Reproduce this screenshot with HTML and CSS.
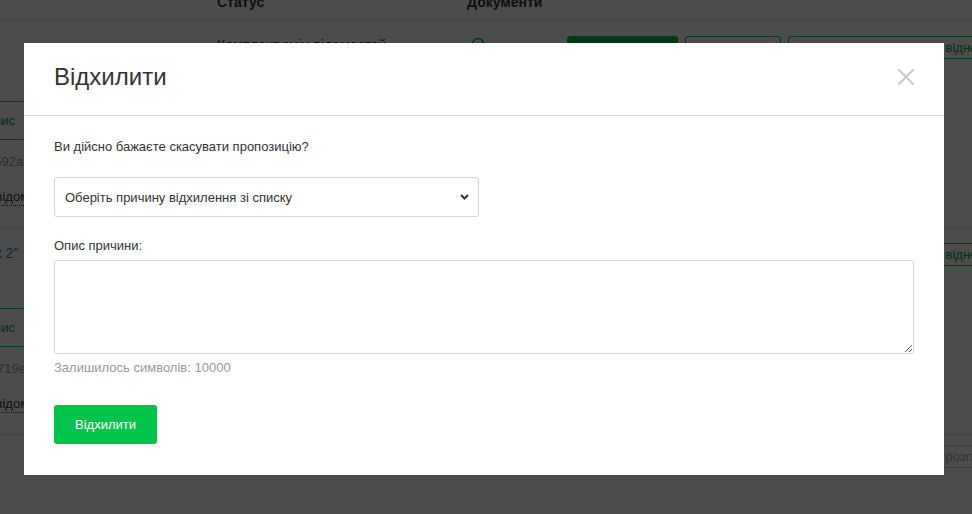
FILE: index.html
```html
<!DOCTYPE html>
<html lang="uk">
<head>
    <meta charset="UTF-8">
    <meta name="viewport" content="width=device-width, initial-scale=1.0">
    <title>Відхилити пропозицію</title>
    <link rel="stylesheet" href="styles.css">
</head>
<body>
    <div class="page">
        <div class="grid thead">
            <div class="th"></div>
            <div class="th">Статус</div>
            <div class="th">Документи</div>
            <div class="th"></div>
        </div>

        <div class="grid row">
            <div class="td obj">
                <a class="obj-title">Об'єкт 1</a>
                <button class="btn btn-outline btn-desc">Опис</button>
                <div class="hash">03be1f0d592a1c4e8</div>
                <a class="dotted">Оновити відомості</a>
            </div>
            <div class="td status">Комплект змін відомостей</div>
            <div class="td docs">
                <svg width="14" height="14" viewBox="0 0 14 14"><circle cx="7" cy="7" r="5.5" fill="none" stroke="#00c04b" stroke-width="1.6"/></svg>
            </div>
            <div class="td actions">
                <button class="btn btn-fill">Підписати</button>
                <button class="btn btn-outline btn-mid">Переглянути</button>
                <button class="btn btn-outline btn-long">Отримати довідку про віднесення</button>
            </div>
        </div>

        <div class="grid row">
            <div class="td obj">
                <a class="obj-title link">ЖК "Парк 2"</a>
                <button class="btn btn-outline btn-desc">Опис</button>
                <div class="hash">0a4c7be3719e5d2f</div>
                <a class="dotted">Оновити відомості</a>
            </div>
            <div class="td status">Комплект змін відомостей</div>
            <div class="td docs">
                <svg width="14" height="14" viewBox="0 0 14 14"><circle cx="7" cy="7" r="5.5" fill="none" stroke="#00c04b" stroke-width="1.6"/></svg>
            </div>
            <div class="td actions">
                <button class="btn btn-fill">Підписати</button>
                <button class="btn btn-outline btn-mid">Переглянути</button>
                <button class="btn btn-outline btn-long">Отримати довідку про віднесення</button>
            </div>
        </div>

        <div class="grid row last">
            <div class="td"></div>
            <div class="td"></div>
            <div class="td"></div>
            <div class="td actions">
                <button class="btn btn-fill">Підписати</button>
                <button class="btn btn-outline btn-mid">Переглянути</button>
                <button class="btn btn-muted btn-long">Отримати довідку про розгляд</button>
            </div>
        </div>
    </div>

    <div class="backdrop"></div>

    <div class="modal">
        <div class="modal-header">
            <h2 class="modal-title">Відхилити</h2>
            <button class="close" aria-label="Закрити">
                <svg width="16" height="16" viewBox="0 0 16 16"><path d="M1 1 L15 15 M15 1 L1 15" stroke="#c9ccd8" stroke-width="2.4" stroke-linecap="round"/></svg>
            </button>
        </div>
        <div class="modal-body">
            <p class="question">Ви дійсно бажаєте скасувати пропозицію?</p>
            <div class="select-wrap">
                <select class="reason">
                    <option>Оберіть причину відхилення зі списку</option>
                    <option>Невідповідність умовам</option>
                    <option>Інша причина</option>
                </select>
                <svg class="chevron" width="9" height="6" viewBox="0 0 9 6"><path d="M1 1 L4.5 4.5 L8 1" fill="none" stroke="#333" stroke-width="2"/></svg>
            </div>
            <label class="field-label" for="desc">Опис причини:</label>
            <textarea id="desc" class="desc"></textarea>
            <div class="counter">Залишилось символів: 10000</div>
            <button class="btn-reject">Відхилити</button>
        </div>
    </div>
</body>
</html>
```

FILE: styles.css
```css
body {
    margin: 0;
    font-family: "Liberation Sans", Arial, sans-serif;
    font-size: 13px;
    color: #333;
    background: #fff;
    overflow: hidden;
}

/* background table */
.page {
    width: 1400px;
    margin-left: -60px;
    margin-top: -8px;
}
.grid {
    display: grid;
    grid-template-columns: 277px 250px 100px 1fr;
}
.th {
    font-size: 14px;
    font-weight: bold;
    line-height: 20px;
    padding-bottom: 8px;
    border-bottom: 1px solid #ddd;
}
.row {
    border-bottom: 1px solid #ddd;
    height: 206px;
}
.row.last {
    border-bottom: 0;
    height: 60px;
}
.td {
    line-height: 18px;
}
.obj {
    display: flex;
    flex-direction: column;
    align-items: flex-start;
}
.obj-title {
    margin-top: 16px;
    font-size: 14px;
    color: #222;
}
.obj-title.link {
    color: #337ab7;
}
.status {
    padding-top: 15px;
    font-size: 14px;
}
.docs {
    padding: 16px 0 0 4px;
}
.actions {
    display: flex;
    gap: 7px;
    padding-top: 15px;
    align-items: flex-start;
}
.row.last .actions {
    padding-top: 10px;
}
.btn {
    font-family: inherit;
    font-size: 13px;
    height: 23px;
    padding: 0 12px;
    border-radius: 3px;
    background: #fff;
    white-space: nowrap;
}
.btn-fill {
    width: 111px;
    background: #00c04b;
    border: 1px solid #00c04b;
    color: #fff;
}
.btn-outline {
    border: 1px solid #00c04b;
    color: #00a040;
}
.btn-mid {
    width: 96px;
}
.btn-long {
    text-align: left;
    padding-left: 20px;
}
.btn-muted {
    border: 1px solid #ccc;
    color: #aaa;
}
.btn-desc {
    margin-top: 46px;
    margin-left: 31px;
    height: 39px;
    width: 120px;
    text-align: left;
}
.hash {
    margin-top: 13px;
    color: #999;
}
.dotted {
    margin-top: 18px;
    color: #333;
    border-bottom: 1px dotted #333;
    line-height: 16px;
}

/* overlay + modal */
.backdrop {
    position: fixed;
    inset: 0;
    background: rgba(0, 0, 0, 0.7);
}
.modal {
    position: fixed;
    top: 43px;
    left: 24px;
    width: 920px;
    background: #fff;
}
.modal-header {
    display: flex;
    justify-content: space-between;
    align-items: center;
    padding: 20px 30px 24px 30px;
    border-bottom: 1px solid #dcdce3;
}
.modal-title {
    margin: 0;
    font-size: 24px;
    font-weight: normal;
    line-height: 28px;
    color: #333;
}
.close {
    border: 0;
    background: none;
    padding: 0;
    width: 16px;
    height: 16px;
    cursor: pointer;
}
.close svg {
    display: block;
}
.modal-body {
    display: flex;
    flex-direction: column;
    align-items: flex-start;
    padding: 22px 30px 31px 30px;
}
.question {
    margin: 0;
    line-height: 18px;
}
.select-wrap {
    position: relative;
    margin-top: 21px;
}
.reason {
    appearance: none;
    display: block;
    width: 425px;
    height: 40px;
    padding: 0 30px 0 10px;
    font-family: inherit;
    font-size: 13px;
    color: #333;
    background: #fff;
    border: 1px solid #d3d3db;
    border-radius: 3px;
}
.chevron {
    position: absolute;
    right: 10px;
    top: 17px;
    pointer-events: none;
}
.field-label {
    margin-top: 20px;
    line-height: 18px;
}
.desc {
    margin-top: 5px;
    width: 100%;
    height: 94px;
    box-sizing: border-box;
    border: 1px solid #d3d3db;
    border-radius: 3px;
    font-family: inherit;
    font-size: 13px;
}
.counter {
    margin-top: 5px;
    line-height: 18px;
    color: #999;
}
.btn-reject {
    margin-top: 28px;
    width: 103px;
    height: 39px;
    border: 0;
    border-radius: 3px;
    background: #00c44b;
    color: #fff;
    font-family: inherit;
    font-size: 13px;
}
```
